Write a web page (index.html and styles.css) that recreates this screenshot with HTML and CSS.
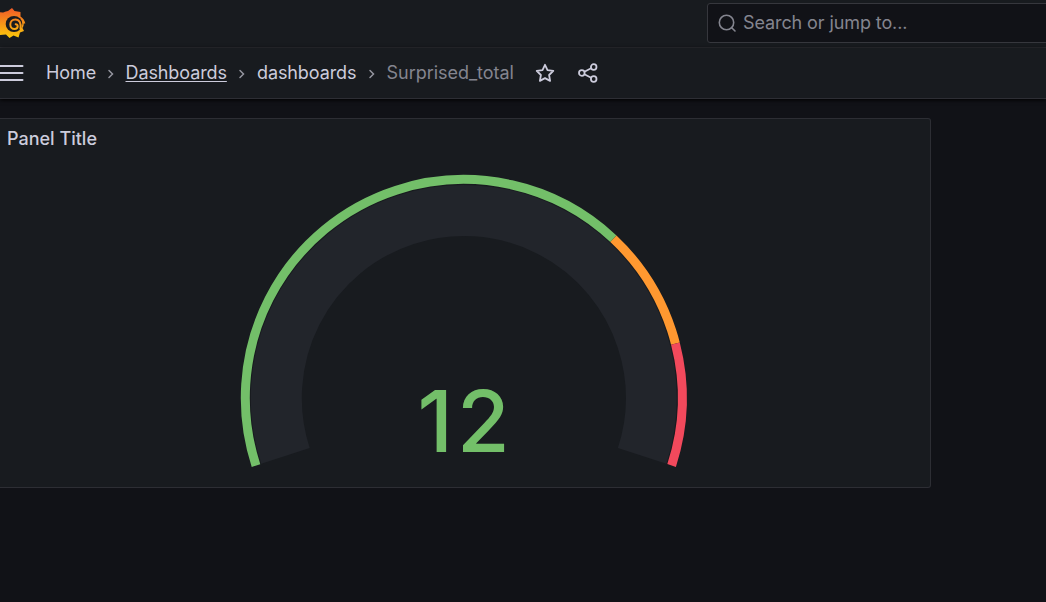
FILE: index.html
```
<!DOCTYPE html>
<html lang="en">
<head>
<meta charset="utf-8">
<title>Surprised_total - Dashboards - Grafana</title>
<link rel="stylesheet" href="styles.css">
</head>
<body>
<header class="topbar">
  <svg class="logo" width="26" height="34" viewBox="0 0 26 34">
    <defs><linearGradient id="flame" gradientUnits="userSpaceOnUse" x1="0" y1="2" x2="0" y2="32"><stop offset="0" stop-color="#f05a28"/><stop offset="1" stop-color="#fbca0a"/></linearGradient></defs>
    <path fill="url(#flame)" d="M-3 6 L3 6.500 Q4 6.500 5 5.800 L8 5 L12 2 L14.500 5 L20.500 6 L20.500 10.500 Q24.500 13 25.300 17.500 L23.800 17.500 Q23.800 20 22.500 22 L24 25 L20 26.500 L18.500 31.500 L13.500 29.500 L9.500 32 L6 28.500 L0 29 L0 24 L-4 20 Z"/>
    <ellipse class="hole" cx="14" cy="18" rx="8.300" ry="8"/>
    <path class="swirl" stroke="url(#flame)" d="M20.500 23 C21.500 17 19.300 13.600 15.300 13.600 C12.200 13.600 10.300 15.700 10.300 18.500 C10.300 21.300 12.200 23 14.500 23 C16.500 23 17.700 21.800 17.700 20.300 C17.700 19 16.800 18.100 15.700 18.200"/>
  </svg>
  <div class="search">
    <svg width="20" height="20" viewBox="0 0 20 20" fill="none" stroke="currentColor" stroke-width="1.600" stroke-linecap="round"><circle cx="9.500" cy="9.500" r="7.200"/><path d="M14.700 14.700L18 18"/></svg>
    <span class="search-text">Search or jump to...</span>
  </div>
</header>
<nav class="navbar">
  <svg class="menu" width="24" height="18" viewBox="0 0 24 18" fill="none" stroke="currentColor" stroke-width="2" stroke-linecap="round"><path d="M-2 2H22.500M-2 9H22.500M-2 16H22.500"/></svg>
  <span class="crumb home">Home</span>
  <svg class="sep" width="8" height="12" viewBox="0 0 8 12"><path d="M2 2.500L5.500 6L2 9.500"/></svg>
  <span class="crumb boards">Dashboards</span>
  <svg class="sep" width="8" height="12" viewBox="0 0 8 12"><path d="M2 2.500L5.500 6L2 9.500"/></svg>
  <span class="crumb folder">dashboards</span>
  <svg class="sep" width="8" height="12" viewBox="0 0 8 12"><path d="M2 2.500L5.500 6L2 9.500"/></svg>
  <span class="crumb current">Surprised_total</span>
  <svg class="star" width="20" height="20" viewBox="0 0 20 20" fill="none" stroke="currentColor" stroke-width="1.800" stroke-linejoin="round"><path d="M10 1.800L12.500 7.100L18.300 7.900L14.100 12L15.100 17.900L10 15.100L4.900 17.900L5.900 12L1.700 7.900L7.500 7.100Z"/></svg>
  <svg class="share" width="20" height="20" viewBox="0 0 20 20" fill="none" stroke="currentColor" stroke-width="1.800"><circle cx="3.800" cy="10" r="2.800"/><circle cx="15.700" cy="4" r="2.800"/><circle cx="15.700" cy="16" r="2.800"/><path d="M6.400 8.700L13.100 5.300M6.400 11.300L13.100 14.700"/></svg>
</nav>
<main class="canvas">
  <section class="panel">
    <h2 class="panel-title">Panel Title</h2>
    <svg class="gauge" width="930" height="328" viewBox="0 159 930 328" fill="none">
      <g transform="rotate(162 463.800 398)">
        <circle class="track" cx="463.800" cy="398" r="187.500" pathLength="360" stroke-dasharray="216 360"/>
        <circle class="limit ok" cx="463.800" cy="398" r="218.500" pathLength="360" stroke-dasharray="151.200 360"/>
        <circle class="limit warn" cx="463.800" cy="398" r="218.500" pathLength="360" stroke-dasharray="32.400 360" stroke-dashoffset="-151.200"/>
        <circle class="limit high" cx="463.800" cy="398" r="218.500" pathLength="360" stroke-dasharray="32.400 360" stroke-dashoffset="-183.600"/>
      </g>
      <text class="value" x="465.500" y="452" text-anchor="middle">12</text>
    </svg>
  </section>
</main>
</body>
</html>
```
FILE: styles.css
```
* { box-sizing: border-box; }
body {
  margin: 0;
  height: 602px;
  overflow: hidden;
  background: #111217;
  color: #ccccdc;
  font-family: Inter, "Liberation Sans", sans-serif;
  font-size: 18px;
}
svg { display: block; flex: none; }
.topbar {
  display: flex;
  height: 48px;
  background: #181b1f;
  border-bottom: 1px solid #2d2e34;
}
.logo { margin-top: 6px; }
.hole { fill: #181b1f; }
.swirl { fill: none; stroke-width: 2; stroke-linecap: round; }
.search {
  display: flex;
  align-items: center;
  width: 360px;
  height: 40px;
  margin: 3px -21px 0 auto;
  padding-left: 9px;
  gap: 6px;
  flex: none;
  background: #111217;
  border: 1px solid #36373d;
  border-radius: 3px;
  color: #84858f;
}
.search-text { white-space: nowrap; letter-spacing: -0.100px; margin-top: -1px; }
.navbar {
  display: flex;
  align-items: center;
  height: 51px;
  background: #181b1f;
  border-bottom: 1px solid #2d2e34;
  box-shadow: 0 1px 4px #000;
  position: relative;
}
.crumb { white-space: nowrap; line-height: 24px; letter-spacing: -0.100px; }
.home { width: 49.500px; margin-left: 22px; }
.boards { width: 101.500px; text-decoration: underline; text-underline-offset: 2px; text-decoration-thickness: 1px; }
.folder { width: 99.500px; }
.current { width: 127.500px; color: #84858f; letter-spacing: -0.030px; }
.sep { margin: 2px 11px 0; fill: none; stroke: #94959f; stroke-width: 1.500; stroke-linecap: round; }
.star { margin-left: 20.500px; }
.share { margin-left: 23.500px; }
.canvas { padding-top: 19px; }
.panel {
  width: 931px;
  height: 370px;
  background: #181b1f;
  border: 1px solid #2d2e34;
  border-left: 0;
  border-radius: 0 3px 3px 0;
}
.panel-title {
  height: 40px;
  margin: 0;
  padding-left: 7px;
  font-size: 18px;
  font-weight: 500;
  line-height: 40px;
}
.track { stroke: #22252b; stroke-width: 51px; }
.limit { stroke-width: 9px; }
.ok { stroke: #73bf69; }
.warn { stroke: #ff9830; }
.high { stroke: #f2495c; }
.value { fill: #73bf69; font-size: 85.500px; font-weight: 500; letter-spacing: 4px; }
```
